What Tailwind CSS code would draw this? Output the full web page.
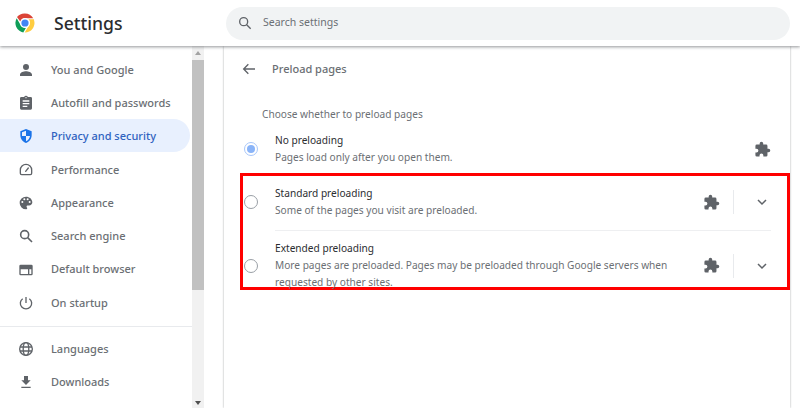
<!DOCTYPE html>
<html lang="en">
  <head>
    <meta charset="UTF-8" />
    <script src="https://cdn.jsdelivr.net/npm/@tailwindcss/browser@4"></script>
    <title>Settings</title>
  </head>
  <body class="w-[800px] h-[408px] overflow-hidden bg-white font-['Noto_Sans','Open_Sans',sans-serif] text-[#6b6f74]">
    <!-- Header -->
    <header class="relative z-10 flex items-center h-[46px] bg-white shadow-[0_1px_3px_rgba(60,64,67,0.55)]">
      <svg class="ml-[15px] w-5 h-5" viewBox="3 3 42 42">
        <path fill="#db4437" d="M24 4a20 20 0 0 1 17.3 10H24a10 10 0 0 0-9.6 7.2L7.2 11.6A20 20 0 0 1 24 4z" />
        <path fill="#0f9d58" d="M6.6 13.9 15.3 29a10 10 0 0 0 10.8 4.8l-5.7 9.9A20 20 0 0 1 6.6 13.9z" />
        <path fill="#ffcd40" d="M43 18a20 20 0 0 1-19.6 26l8.7-15A10 10 0 0 0 31 16h12z" />
        <circle cx="24" cy="24" r="10.500" fill="#fff" />
        <circle cx="24" cy="24" r="7.600" fill="#4285f4" />
      </svg>
      <h1 class="ml-[19px] w-[172px] text-[17.6px] font-medium text-[#2b2d30]">Settings</h1>
      <div class="flex items-center w-[564px] h-[33px] rounded-full bg-[#f1f3f4] pl-[11px]">
        <svg class="w-4 h-4" viewBox="0 0 24 24" fill="none" stroke="#5f6368" stroke-width="2">
          <circle cx="10" cy="10" r="6" />
          <path d="m14.500 14.500 6 6" />
        </svg>
        <span class="ml-[10px] text-[10.5px]">Search settings</span>
      </div>
    </header>

    <div class="flex h-[362px]">
      <!-- Sidebar -->
      <nav class="w-[192px] shrink-0 pt-[7.5px] text-[11px] font-medium">
        <a class="flex items-center h-[33.25px] pl-[18px]">
          <svg class="w-4 h-4 mr-[17px]" viewBox="0 0 24 24" fill="#5f6368"><path d="M12 12a4.500 4.500 0 1 0 0-9 4.500 4.500 0 0 0 0 9zm0 2c-3.300 0-9 1.700-9 5v2h18v-2c0-3.300-5.700-5-9-5z" /></svg>
          You and Google
        </a>
        <a class="flex items-center h-[33.25px] pl-[18px]">
          <svg class="w-4 h-4 mr-[17px]" viewBox="0 0 24 24" fill="#5f6368"><path d="M19 3h-4.200a3 3 0 0 0-5.600 0H5a2 2 0 0 0-2 2v15a2 2 0 0 0 2 2h14a2 2 0 0 0 2-2V5a2 2 0 0 0-2-2zm-7 0a1 1 0 1 1 0 2 1 1 0 0 1 0-2zm2 15H7v-2h7v2zm3-4H7v-2h10v2zm0-4H7V8h10v2z" /></svg>
          Autofill and passwords
        </a>
        <a class="flex items-center h-[33.25px] -mt-[1.25px] mb-[1.25px] pt-[1px] pl-[18px] rounded-r-full bg-[#e8f0fe] w-[190px] text-[#2f62c0]">
          <svg class="w-4 h-4 mr-[17px]" viewBox="0 0 24 24" fill="#1a73e8"><path fill-rule="evenodd" d="M12 1.500 3.500 5v6c0 5.300 3.600 10.200 8.500 11.500 4.900-1.300 8.500-6.200 8.500-11.500V5L12 1.500zM12 12H6V6.500l6-2.500v8zm0 0h6c-.5 3.700-2.900 6.900-6 8v-8z" /></svg>
          Privacy and security
        </a>
        <a class="flex items-center h-[33.25px] pl-[18px]">
          <svg class="w-4 h-4 mr-[17px]" viewBox="0 0 24 24" fill="none" stroke="#5f6368" stroke-width="2"><path d="M6 20h12a2 2 0 0 0 2-2v-5a8.500 8.500 0 1 0-17 0v5a2 2 0 0 0 2 2z" transform="translate(.5 -1)" /><path d="m11.500 14 4-5" stroke-linecap="round" /></svg>
          Performance
        </a>
        <a class="flex items-center h-[33.25px] pl-[18px]">
          <svg class="w-4 h-4 mr-[17px]" viewBox="0 0 24 24" fill="#5f6368"><path d="M12 2.500a9.500 9.500 0 0 0 0 19c1.100 0 1.800-.8 1.800-1.700 0-.5-.2-.9-.5-1.200-.3-.4-.5-.7-.5-1.200 0-1 .8-1.700 1.800-1.700h2c2.700 0 4.900-2.200 4.900-4.900 0-4.600-4.300-8.300-9.500-8.300zM6.500 12a1.500 1.500 0 1 1 0-3 1.500 1.500 0 0 1 0 3zm3-4a1.500 1.500 0 1 1 0-3 1.500 1.500 0 0 1 0 3zm5 0a1.500 1.500 0 1 1 0-3 1.500 1.500 0 0 1 0 3zm3 4a1.500 1.500 0 1 1 0-3 1.500 1.500 0 0 1 0 3z" /></svg>
          Appearance
        </a>
        <a class="flex items-center h-[33.25px] pl-[18px]">
          <svg class="w-4 h-4 mr-[17px]" viewBox="0 0 24 24" fill="none" stroke="#5f6368" stroke-width="2.400"><circle cx="10" cy="10" r="6" /><path d="m14.500 14.500 6.500 6.500" /></svg>
          Search engine
        </a>
        <a class="flex items-center h-[33.25px] pl-[18px]">
          <svg class="w-4 h-4 mr-[17px]" viewBox="0 0 24 24" fill="#5f6368"><path d="M20 4H4a2 2 0 0 0-2 2v12a2 2 0 0 0 2 2h16a2 2 0 0 0 2-2V6a2 2 0 0 0-2-2zM4 18v-7h11v7H4zm16 0h-3v-7h3v7z" /></svg>
          Default browser
        </a>
        <a class="flex items-center h-[33.25px] pl-[18px]">
          <svg class="w-4 h-4 mr-[17px]" viewBox="0 0 24 24" fill="none" stroke="#5f6368" stroke-width="2"><path d="M12 3v9" /><path d="M7 5.500a8.500 8.500 0 1 0 10 0" /></svg>
          On startup
        </a>
        <div class="h-px mt-[6px] mb-[6px] bg-[#e8eaed]"></div>
        <a class="flex items-center h-[33.25px] pl-[18px]">
          <svg class="w-4 h-4 mr-[17px]" viewBox="0 0 24 24" fill="none" stroke="#5f6368" stroke-width="2"><circle cx="12" cy="12" r="9.500" /><ellipse cx="12" cy="12" rx="4.200" ry="9.500" /><path d="M3 9h18M3 15h18" /></svg>
          Languages
        </a>
        <a class="flex items-center h-[33.25px] pl-[18px]">
          <svg class="w-4 h-4 mr-[17px]" viewBox="0 0 24 24" fill="#5f6368"><path d="M19 9.500h-4V3H9v6.500H5l7 7 7-7zM5 19v2h14v-2H5z" /></svg>
          Downloads
        </a>
      </nav>

      <!-- Scrollbar -->
      <div class="flex flex-col items-center w-[12px] shrink-0 bg-[#f1f1f1]">
        <div class="mt-[5px] mb-[5px] w-0 h-0 border-x-[3px] border-x-transparent border-b-[4px] border-b-[#a3a3a3]"></div>
        <div class="w-full h-[230px] bg-[#c1c1c1]"></div>
        <div class="mt-auto mb-[3px] w-0 h-0 border-x-[3px] border-x-transparent border-t-[4px] border-t-[#505050]"></div>
      </div>

      <!-- Main card -->
      <main class="ml-[20px] w-[566px] h-full bg-white shadow-[0_0_2px_rgba(60,64,67,0.45)] text-[10.15px]">
        <div class="flex items-center h-[16px] mt-[15px] pl-[17px]">
          <svg class="w-[16px] h-[16px]" viewBox="0 0 24 24" fill="none" stroke="#5f6368" stroke-width="2"><path d="M21 12H4M11 5l-7 7 7 7" /></svg>
          <span class="ml-[15px] text-[11px] font-medium">Preload pages</span>
        </div>

        <p class="mt-[29px] pl-[38px] leading-[16px]">Choose whether to preload pages</p>

        <div class="flex items-center h-[42px] mt-[6px] ml-[16px] w-[550px] pl-[4px]">
          <span class="flex items-center justify-center w-[14px] h-[14px] rounded-full border-[1.5px] border-[#a8c7fa]">
            <span class="w-[8px] h-[8px] rounded-full bg-[#8ab4f8]"></span>
          </span>
          <div class="ml-[17px] flex-1">
            <p class="leading-[17px] text-[#2b2d30]">No preloading</p>
            <p class="leading-[17px]">Pages load only after you open them.</p>
          </div>
          <svg class="w-[17px] h-[17px] mr-[19px]" viewBox="0 0 24 24" fill="#5f6368"><path d="M20.500 11H19V7a2 2 0 0 0-2-2h-4V3.500a2.500 2.500 0 0 0-5 0V5H4a2 2 0 0 0-2 2v3.800h1.500a2.700 2.700 0 0 1 0 5.400H2V20a2 2 0 0 0 2 2h3.800v-1.500a2.700 2.700 0 0 1 5.400 0V22H17a2 2 0 0 0 2-2v-4h1.500a2.500 2.500 0 0 0 0-5z" /></svg>
        </div>

        <!-- Highlighted options -->
        <div class="mt-[3px] ml-[16px] w-[550px] h-[117px] border-[3px] border-[#ff0000]">
          <div class="flex items-center h-[54px] pl-[1px] pb-[2px]">
            <span class="w-[14px] h-[14px] rounded-full border-[1.5px] border-[#9aa0a6]"></span>
            <div class="ml-[17px] flex-1">
              <p class="leading-[17px] text-[#2b2d30]">Standard preloading</p>
              <p class="leading-[17px]">Some of the pages you visit are preloaded.</p>
            </div>
            <svg class="w-[17px] h-[17px]" viewBox="0 0 24 24" fill="#5f6368"><path d="M20.500 11H19V7a2 2 0 0 0-2-2h-4V3.500a2.500 2.500 0 0 0-5 0V5H4a2 2 0 0 0-2 2v3.800h1.500a2.700 2.700 0 0 1 0 5.400H2V20a2 2 0 0 0 2 2h3.800v-1.500a2.700 2.700 0 0 1 5.400 0V22H17a2 2 0 0 0 2-2v-4h1.500a2.500 2.500 0 0 0 0-5z" /></svg>
            <span class="ml-[13px] w-px h-[24px] bg-[#e8eaed]"></span>
            <svg class="ml-[22px] mr-[19px] w-[12px] h-[12px]" viewBox="0 0 24 24" fill="none" stroke="#5f6368" stroke-width="3"><path d="m4 8 8 8 8-8" /></svg>
          </div>
          <div class="ml-[32px] mr-[16px] h-px bg-[#eeeff1]"></div>
          <div class="flex items-center pl-[1px] pt-[9px]">
            <span class="w-[14px] h-[14px] rounded-full border-[1.5px] border-[#9aa0a6]"></span>
            <div class="ml-[17px] w-[400px]">
              <p class="leading-[17px] text-[#2b2d30]">Extended preloading</p>
              <p class="leading-[17px]">More pages are preloaded. Pages may be preloaded through Google servers when requested by other sites.</p>
            </div>
            <svg class="ml-auto w-[17px] h-[17px]" viewBox="0 0 24 24" fill="#5f6368"><path d="M20.500 11H19V7a2 2 0 0 0-2-2h-4V3.500a2.500 2.500 0 0 0-5 0V5H4a2 2 0 0 0-2 2v3.800h1.500a2.700 2.700 0 0 1 0 5.400H2V20a2 2 0 0 0 2 2h3.800v-1.500a2.700 2.700 0 0 1 5.400 0V22H17a2 2 0 0 0 2-2v-4h1.500a2.500 2.500 0 0 0 0-5z" /></svg>
            <span class="ml-[13px] w-px h-[24px] bg-[#e8eaed]"></span>
            <svg class="ml-[22px] mr-[19px] w-[12px] h-[12px]" viewBox="0 0 24 24" fill="none" stroke="#5f6368" stroke-width="3"><path d="m4 8 8 8 8-8" /></svg>
          </div>
        </div>
      </main>
    </div>
  </body>
</html>
